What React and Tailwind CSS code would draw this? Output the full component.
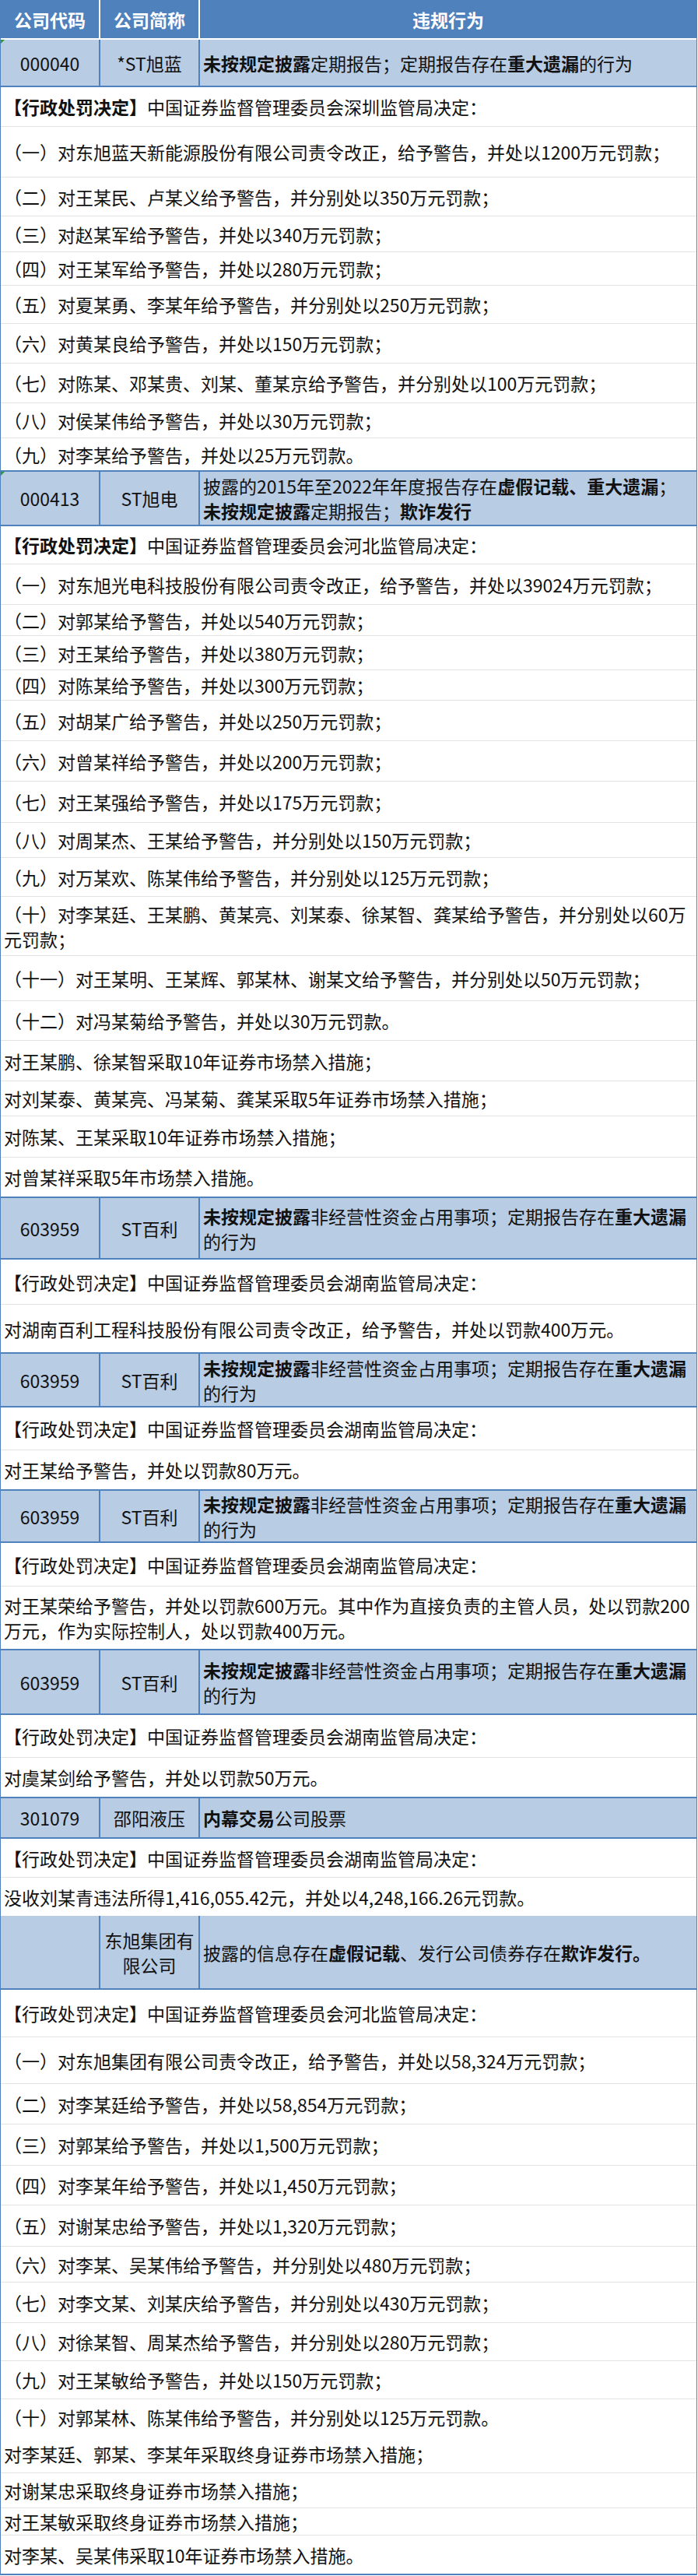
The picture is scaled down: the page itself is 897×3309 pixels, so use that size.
import React from 'react';

const B = ({ children }) => <span className="font-bold">{children}</span>;

const Flag = () => (
    <span className="absolute left-0 top-0 w-0 h-0 border-t-[5px] border-r-[5px] border-t-[#2f9a35] border-r-transparent" />
);

// one blue company row: code / short name / violation
const MainRow = ({ h, code, name, top = true, flag, children }) => (
    <div className={`relative grid grid-cols-[128px_128px_1fr] bg-[#b8cce4] border-b-2 border-[#4f81bd] ${top ? 'border-t-2' : ''} ${h}`}>
        {flag && <Flag />}
        <div className="flex items-center justify-center border-r-2 border-[#4f81bd] px-1 text-center">
            <div>{code}</div>
        </div>
        <div className="flex items-center justify-center border-r-2 border-[#4f81bd] px-1 text-center">
            <div>{name}</div>
        </div>
        <div className="flex items-center px-1">
            <div>{children}</div>
        </div>
    </div>
);

// one white detail line under a company
const Line = ({ h, last, end, children }) => (
    <div className={`flex items-center px-1 ${h} ${end ? 'border-b-2 border-[#4f81bd]' : last ? '' : 'border-b border-[#e3e3e3]'}`}>
        <div>{children}</div>
    </div>
);

const decision = (bureau, bold) => (
    <>
        {bold ? <B>【行政处罚决定】</B> : '【行政处罚决定】'}中国证券监督管理委员会{bureau}监管局决定：
    </>
);

const baili = (
    <>
        <B>未按规定披露</B>非经营性资金占用事项；定期报告存在<B>重大遗漏</B>的行为
    </>
);

const App = () => {
    return (
        <div className="w-[896px] bg-white border-x border-[#4f81bd] font-['Noto_Sans_CJK_SC','Microsoft_YaHei',sans-serif] text-[23px] leading-[32px] text-[#111]">
            {/* Header */}
            <div className="grid grid-cols-[128px_128px_1fr] h-[51px] bg-[#4f81bd] border-b-2 border-white text-white font-bold">
                <div className="flex items-center justify-center border-r-2 border-white">公司代码</div>
                <div className="flex items-center justify-center border-r-2 border-white">公司简称</div>
                <div className="flex items-center justify-center">违规行为</div>
            </div>

            {/* 000040 */}
            <MainRow h="h-[61px]" code="000040" name="*ST旭蓝" top={false} flag>
                <B>未按规定披露</B>定期报告；定期报告存在<B>重大遗漏</B>的行为
            </MainRow>
            <Line h="h-[51px]">{decision('深圳', true)}</Line>
            <Line h="h-[65px]">（一）对东旭蓝天新能源股份有限公司责令改正，给予警告，并处以1200万元罚款；</Line>
            <Line h="h-[50px]">（二）对王某民、卢某义给予警告，并分别处以350万元罚款；</Line>
            <Line h="h-[46px]">（三）对赵某军给予警告，并处以340万元罚款；</Line>
            <Line h="h-[43px]">（四）对王某军给予警告，并处以280万元罚款；</Line>
            <Line h="h-[49px]">（五）对夏某勇、李某年给予警告，并分别处以250万元罚款；</Line>
            <Line h="h-[51px]">（六）对黄某良给予警告，并处以150万元罚款；</Line>
            <Line h="h-[51px]">（七）对陈某、邓某贵、刘某、董某京给予警告，并分别处以100万元罚款；</Line>
            <Line h="h-[45px]">（八）对侯某伟给予警告，并处以30万元罚款；</Line>
            <Line h="h-[41px]" last>（九）对李某给予警告，并处以25万元罚款。</Line>

            {/* 000413 */}
            <MainRow h="h-[72px]" code="000413" name="ST旭电" flag>
                披露的2015年至2022年年度报告存在<B>虚假记载、重大遗漏</B>；<br />
                <B>未按规定披露</B>定期报告；<B>欺诈发行</B>
            </MainRow>
            <Line h="h-[49px]">{decision('河北', true)}</Line>
            <Line h="h-[52px]">（一）对东旭光电科技股份有限公司责令改正，给予警告，并处以39024万元罚款；</Line>
            <Line h="h-[40px]">（二）对郭某给予警告，并处以540万元罚款；</Line>
            <Line h="h-[44px]">（三）对王某给予警告，并处以380万元罚款；</Line>
            <Line h="h-[39px]">（四）对陈某给予警告，并处以300万元罚款；</Line>
            <Line h="h-[52px]">（五）对胡某广给予警告，并处以250万元罚款；</Line>
            <Line h="h-[52px]">（六）对曾某祥给予警告，并处以200万元罚款；</Line>
            <Line h="h-[53px]">（七）对王某强给予警告，并处以175万元罚款；</Line>
            <Line h="h-[45px]">（八）对周某杰、王某给予警告，并分别处以150万元罚款；</Line>
            <Line h="h-[50px]">（九）对万某欢、陈某伟给予警告，并分别处以125万元罚款；</Line>
            <Line h="h-[76px]">（十）对李某廷、王某鹏、黄某亮、刘某泰、徐某智、龚某给予警告，并分别处以60万<br />元罚款；</Line>
            <Line h="h-[58px]">（十一）对王某明、王某辉、郭某林、谢某文给予警告，并分别处以50万元罚款；</Line>
            <Line h="h-[51px]">（十二）对冯某菊给予警告，并处以30万元罚款。</Line>
            <Line h="h-[52px]">对王某鹏、徐某智采取10年证券市场禁入措施；</Line>
            <Line h="h-[45px]">对刘某泰、黄某亮、冯某菊、龚某采取5年证券市场禁入措施；</Line>
            <Line h="h-[53px]">对陈某、王某采取10年证券市场禁入措施；</Line>
            <Line h="h-[50px]" last>对曾某祥采取5年市场禁入措施。</Line>

            {/* 603959 x4 */}
            <MainRow h="h-[81px]" code="603959" name="ST百利">{baili}</MainRow>
            <Line h="h-[58px]">{decision('湖南')}</Line>
            <Line h="h-[61px]" last>对湖南百利工程科技股份有限公司责令改正，给予警告，并处以罚款400万元。</Line>

            <MainRow h="h-[71px]" code="603959" name="ST百利">{baili}</MainRow>
            <Line h="h-[55px]">{decision('湖南')}</Line>
            <Line h="h-[50px]" last>对王某给予警告，并处以罚款80万元。</Line>

            <MainRow h="h-[69px]" code="603959" name="ST百利">{baili}</MainRow>
            <Line h="h-[56px]">{decision('湖南')}</Line>
            <Line h="h-[80px]" last>对王某荣给予警告，并处以罚款600万元。其中作为直接负责的主管人员，处以罚款200<br />万元，作为实际控制人，处以罚款400万元。</Line>

            <MainRow h="h-[85px]" code="603959" name="ST百利">{baili}</MainRow>
            <Line h="h-[55px]">{decision('湖南')}</Line>
            <Line h="h-[50px]" last>对虞某剑给予警告，并处以罚款50万元。</Line>

            {/* 301079 */}
            <MainRow h="h-[54px]" code="301079" name="邵阳液压">
                <B>内幕交易</B>公司股票
            </MainRow>
            <Line h="h-[50px]">{decision('湖南')}</Line>
            <Line h="h-[49px]" last>没收刘某青违法所得1,416,055.42元，并处以4,248,166.26元罚款。</Line>

            {/* 东旭集团 */}
            <MainRow h="h-[95px]" code="" name="东旭集团有限公司" top={false}>
                披露的信息存在<B>虚假记载</B>、发行公司债券存在<B>欺诈发行。</B>
            </MainRow>
            <Line h="h-[61px]">{decision('河北')}</Line>
            <Line h="h-[60px]">（一）对东旭集团有限公司责令改正，给予警告，并处以58,324万元罚款；</Line>
            <Line h="h-[52px]">（二）对李某廷给予警告，并处以58,854万元罚款；</Line>
            <Line h="h-[53px]">（三）对郭某给予警告，并处以1,500万元罚款；</Line>
            <Line h="h-[51px]">（四）对李某年给予警告，并处以1,450万元罚款；</Line>
            <Line h="h-[53px]">（五）对谢某忠给予警告，并处以1,320万元罚款；</Line>
            <Line h="h-[46px]">（六）对李某、吴某伟给予警告，并分别处以480万元罚款；</Line>
            <Line h="h-[52px]">（七）对李文某、刘某庆给予警告，并分别处以430万元罚款；</Line>
            <Line h="h-[49px]">（八）对徐某智、周某杰给予警告，并分别处以280万元罚款；</Line>
            <Line h="h-[49px]">（九）对王某敏给予警告，并处以150万元罚款；</Line>
            <Line h="h-[46px]" last>（十）对郭某林、陈某伟给予警告，并分别处以125万元罚款。</Line>
            <Line h="h-[49px]">对李某廷、郭某、李某年采取终身证券市场禁入措施；</Line>
            <Line h="h-[45px]">对谢某忠采取终身证券市场禁入措施；</Line>
            <Line h="h-[35px]">对王某敏采取终身证券市场禁入措施；</Line>
            <Line h="h-[51px]" end>对李某、吴某伟采取10年证券市场禁入措施。</Line>
        </div>
    );
};

export default App;
